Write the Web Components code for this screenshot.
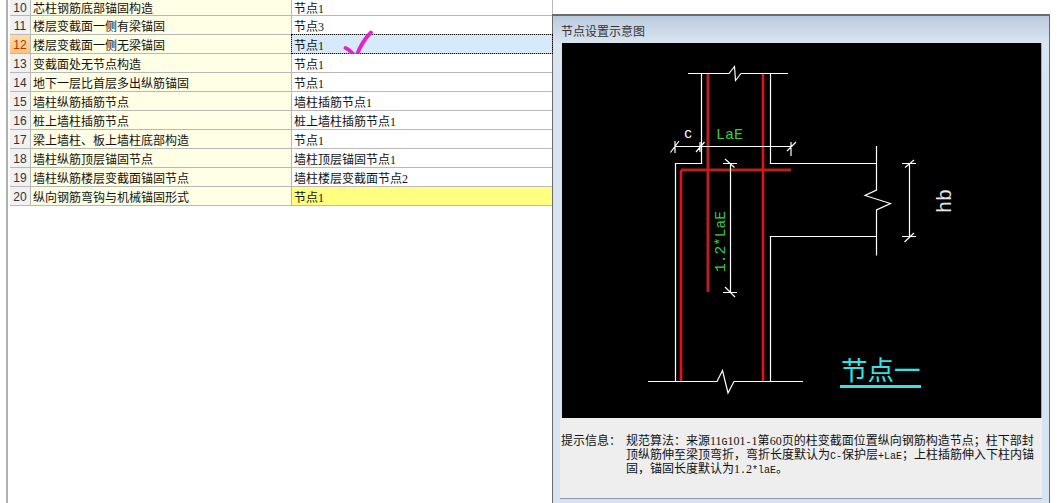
<!DOCTYPE html>
<html lang="zh">
<head>
<meta charset="utf-8">
<title>节点设置</title>
<style>
    html, body { margin: 0; height: 100%; background: #fff; overflow: hidden; }
    body {
        display: flex;
        align-items: flex-start;
        font: 12px/16px "Noto Sans CJK SC", sans-serif;
        color: #111;
        text-spacing-trim: space-all;
    }
</style>
</head>
<body>
    <setting-table>
        <setting-row num="10" value="节点1">芯柱钢筋底部锚固构造</setting-row>
        <setting-row num="11" value="节点3">楼层变截面一侧有梁锚固</setting-row>
        <setting-row num="12" value="节点1" state="current">楼层变截面一侧无梁锚固<check-mark slot="mark"></check-mark></setting-row>
        <setting-row num="13" value="节点1">变截面处无节点构造</setting-row>
        <setting-row num="14" value="节点1">地下一层比首层多出纵筋锚固</setting-row>
        <setting-row num="15" value="墙柱插筋节点1">墙柱纵筋插筋节点</setting-row>
        <setting-row num="16" value="桩上墙柱插筋节点1">桩上墙柱插筋节点</setting-row>
        <setting-row num="17" value="节点1">梁上墙柱&#x3001;板上墙柱底部构造</setting-row>
        <setting-row num="18" value="墙柱顶层锚固节点1">墙柱纵筋顶层锚固节点</setting-row>
        <setting-row num="19" value="墙柱楼层变截面节点2">墙柱纵筋楼层变截面锚固节点</setting-row>
        <setting-row num="20" value="节点1" state="changed">纵向钢筋弯钩与机械锚固形式</setting-row>
    </setting-table>

    <node-panel heading="节点设置示意图">
        <node-diagram></node-diagram>
        <hint-text slot="info" label="提示信息&#xFF1A;" text="规范算法&#xFF1A;来源11G101-1第60页的柱变截面位置纵向钢筋构造节点&#xFF1B;柱下部封顶纵筋伸至梁顶弯折&#xFF0C;弯折长度默认为C-保护层+LaE&#xFF1B;上柱插筋伸入下柱内锚固&#xFF0C;锚固长度默认为1.2*laE&#x3002;"></hint-text>
    </node-panel>

<script>
// half width runs, 6px per char like the old bitmap font: digits in serif 12px, the rest in mono 10px
function markLatin(str){
    return str.replace(/[\x21-\x7e]+/g, run =>
        run.replace(/[0-9]+|[^0-9]+/g, m => `<span class="${/[0-9]/.test(m) ? 'dig' : 'lat'}">${m}</span>`));
}
const latinStyle = `
    .lat { font-family: "Liberation Mono", monospace; font-size: 10px; line-height: 1; }
    .dig { font-family: "Liberation Serif", serif; font-size: 12px; line-height: 1; }
`;

class SettingTable extends HTMLElement{
    constructor(){
        super();
        this.attachShadow({mode : 'open'});
    }

    connectedCallback(){
        this.shadowRoot.innerHTML = `
        <style>
        :host {
            display: block;
            flex: none;
            width: 546px;
            margin-left: 6px;
            padding-left: 2px;
            border-left: 2px solid #b0b0b0;
            box-sizing: border-box;
            height: 503px;
        }
        </style>
        <slot></slot>
        `
    }
}

class SettingRow extends HTMLElement{
    constructor(){
        super();
        this.attachShadow({mode : 'open'});
    }

    connectedCallback(){
        const value = markLatin(this.getAttribute('value') || '');
        this.shadowRoot.innerHTML = `
        <style>
        ${latinStyle}
        :host {
            display: grid;
            grid-template-columns: 20px 260px 260px;
            grid-template-rows: 18px;
            height: 19px;
            column-gap: 1px;
            background: #b8b8b8;
            padding-right: 1px;
            box-sizing: border-box;
            width: 543px;
        }
        :host(:first-of-type) { height: 16px; grid-template-rows: 15px; }
        .cell { display: flex; align-items: center; white-space: nowrap; padding-top: 1px; box-sizing: border-box; }
        .num {
            justify-content: center;
            background: #f1f1f1;
            color: #333;
            font-family: "Liberation Sans", sans-serif;
        }
        .name { background: #ffffe6; padding-left: 2px; }
        .value { background: #fff; padding-left: 2px; position: relative; }
        :host([state="current"]) .num { background: linear-gradient(#ffdca6, #fdc27a); color: #a4380c; }
        :host([state="current"]) .value { background: #d6eafb; outline: 1px dotted #000; }
        :host([state="changed"]) .value { background: #ffff80; }
        </style>
        <div class="cell num">${this.getAttribute('num')}</div>
        <div class="cell name"><slot></slot></div>
        <div class="cell value"><span>${value}</span><slot name="mark"></slot></div>
        `
    }
}

class CheckMark extends HTMLElement{
    constructor(){
        super();
        this.attachShadow({mode : 'open'});
    }

    connectedCallback(){
        this.shadowRoot.innerHTML = `
        <style>
        :host { position: absolute; left: 50px; top: -6px; width: 32px; height: 32px; display: block; }
        svg { display: block; }
        </style>
        <svg width="32" height="32" viewBox="0 0 32 32">
            <path d="M3.5 19 C6.5 20 10 23.5 14 28 C17 20 21 11 29 3.5" fill="none" stroke="#e91fcf" stroke-width="3.8" stroke-linecap="round" stroke-linejoin="round"/>
        </svg>
        `
    }
}

class NodePanel extends HTMLElement{
    constructor(){
        super();
        this.attachShadow({mode : 'open'});
    }

    connectedCallback(){
        this.shadowRoot.innerHTML = `
        <style>
        :host {
            display: flex;
            flex-direction: column;
            flex: none;
            width: 498px;
            height: 489px;
            margin-top: 14px;
            box-sizing: border-box;
            border: solid #6b6b6b;
            border-width: 2px 1px 0 1px;
            padding: 0 7px 4px;
            background: linear-gradient(#b9cade 0, #dce6f2 28px, #d7e3f1 60px);
        }
        .title { height: 27px; padding: 7px 0 0 1px; box-sizing: border-box; color: #333; flex: none; }
        .view { flex: none; padding-left: 2px; }
        .info { flex: 1; min-height: 0; }
        </style>
        <div class="title">${this.getAttribute('heading')}</div>
        <div class="view"><slot></slot></div>
        <div class="info"><slot name="info"></slot></div>
        `
    }
}

class NodeDiagram extends HTMLElement{
    constructor(){
        super();
        this.attachShadow({mode : 'open'});
    }

    connectedCallback(){
        // viewBox uses the picture's own coordinates
        this.shadowRoot.innerHTML = `
        <style>
        :host { display: block; width: 479px; height: 375px; border-right: 1px solid #a8a8a8; box-sizing: content-box; }
        svg { display: block; background: #000; }
        .wall { fill: none; stroke: #fff; stroke-width: 1.2; }
        .bar { fill: none; stroke: #e01418; stroke-width: 2.6; }
        .bar.dim { stroke: #b82020; stroke-width: 3; }
        text { font-family: "Liberation Mono", monospace; }
        </style>
        <svg width="479" height="375" viewBox="562 43 479 375">
            <!-- rebar -->
            <path class="bar dim" d="M708 73.5V292"/>
            <path class="bar dim" d="M681 170H791"/>
            <path class="bar" d="M681 170V381"/>
            <path class="bar" d="M763 73.5V381"/>
            <!-- outline -->
            <path class="wall" d="M688 73.5H729L734.5 66.5L735.5 80.5L741 73.5H788"/>
            <path class="wall" d="M701.5 73.5V163.5H675.5V381"/>
            <path class="wall" d="M770.5 73.5V163.5H876.5"/>
            <path class="wall" d="M876.5 146V190L865 195.5L890.5 203.5L876.5 210V255.5"/>
            <path class="wall" d="M770.5 381V236.5H876.5"/>
            <path class="wall" d="M648 381.5H717L722.5 370.5L728 393L734 381.5H803"/>
            <!-- dimensions -->
            <path class="wall" d="M675 146.5H791M675 141V153M700 142V152M791 142V156M670.5 152.5L679 141M696 152L704.5 142M787 151L796 142"/>
            <path class="wall" d="M730.5 163.5V292.5M723 163.5H737M725 159L734.5 167.5M723 292.5H737M725 287L735 297"/>
            <path class="wall" d="M909.5 163.5V236.5M902 163.5H916M905 167.5L914 160M902 236.5H916M904.5 242L914 233"/>
            <!-- labels -->
            <text x="684" y="138" font-size="14" fill="#fff">c</text>
            <text x="716" y="139" font-size="15" fill="#35cf45">LaE</text>
            <text transform="translate(725 272) rotate(-90)" font-size="14.5" fill="#35cf45">1.2*LaE</text>
            <text transform="translate(951 213) rotate(-90)" font-size="20" fill="#e6e6e6">hb</text>
            <text x="841" y="380" font-size="26.5" fill="#2fe4e4" style="font-family:'Noto Sans CJK SC',sans-serif">节点一</text>
            <rect x="840" y="385" width="81" height="3" fill="#2fe4e4"/>
        </svg>
        `
    }
}

class HintText extends HTMLElement{
    constructor(){
        super();
        this.attachShadow({mode : 'open'});
    }

    connectedCallback(){
        this.shadowRoot.innerHTML = `
        <style>
        ${latinStyle}
        :host {
            display: flex;
            height: 81px;
            box-sizing: border-box;
            padding: 16px 0 0 1px;
            background: #eeeeee;
            border-bottom: 1px solid #8f97a3;
            line-height: 12px;
            color: #111;
        }
        .label { flex: none; width: 65px; }
        .body { width: 410px; word-break: break-all; }
        </style>
        <div class="label">${this.getAttribute('label')}</div>
        <div class="body">${markLatin(this.getAttribute('text'))}</div>
        `
    }
}

customElements.define('setting-table', SettingTable);
customElements.define('setting-row', SettingRow);
customElements.define('check-mark', CheckMark);
customElements.define('node-panel', NodePanel);
customElements.define('node-diagram', NodeDiagram);
customElements.define('hint-text', HintText);
</script>
</body>
</html>
